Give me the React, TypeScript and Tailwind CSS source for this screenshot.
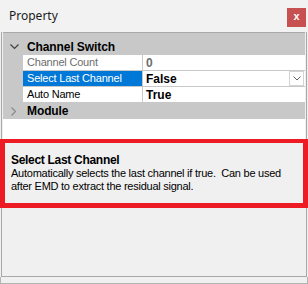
import React from "react";

const Down = ({ c }: { c: string }) => (
  <svg width="9" height="6" viewBox="0 0 9 6">
    <path d="M0.5 0.5 L4.5 4.5 L8.5 0.5" fill="none" stroke={c} strokeWidth="1.2" />
  </svg>
);

const Right = ({ c }: { c: string }) => (
  <svg width="6" height="9" viewBox="0 0 6 9">
    <path d="M0.5 0.5 L4.5 4.5 L0.5 8.5" fill="none" stroke={c} strokeWidth="1.2" />
  </svg>
);

function Category({ label, open }: { label: string; open: boolean }) {
  return (
    <div className="flex h-[16px] items-center bg-[#c8c8c8]">
      <div className="flex w-[20px] justify-center items-center pl-[2px]">
        {open ? <Down c="#404040" /> : <Right c="#8a8a8a" />}
      </div>
      <span className="pl-[4px] text-[12px] font-bold text-black tracking-[-0.1px]">{label}</span>
    </div>
  );
}

function Prop({
  label,
  value,
  selected,
  readonly,
  dropdown,
}: {
  label: string;
  value: string;
  selected?: boolean;
  readonly?: boolean;
  dropdown?: boolean;
}) {
  return (
    <div className="flex h-[16px] bg-[#c8c8c8]">
      <div className="w-[20px]" />
      <div
        className={
          "w-[119px] mb-[1px] pl-[4px] flex items-center text-[11px] tracking-[-0.2px] " +
          (selected ? "bg-[#0078d7] text-white" : "bg-white " + (readonly ? "text-[#6d6d6d]" : "text-black"))
        }
      >
        {label}
      </div>
      <div className="w-[1px]" />
      <div
        className={
          "flex-1 mb-[1px] bg-white pl-[3px] flex items-center justify-between text-[12px] font-bold " +
          (readonly ? "text-[#6d6d6d]" : "text-black")
        }
      >
        <span>{value}</span>
        {dropdown && (
          <div className="w-[15px] h-[15px] mr-[1px] border border-[#d4d4d4] bg-white flex items-center justify-center">
            <svg width="8" height="5" viewBox="0 0 8 5">
              <path d="M0.5 0.5 L4 4 L7.5 0.5" fill="none" stroke="#606060" strokeWidth="1" />
            </svg>
          </div>
        )}
      </div>
    </div>
  );
}

export default function App() {
  return (
    <div
      className="w-[308px] h-[284px] bg-[#f0f0f0] flex flex-col overflow-hidden"
      style={{ fontFamily: '"Liberation Sans", Arial, sans-serif' }}
    >
      <div className="h-[32px] bg-[#f2f2f2] flex items-start justify-between pl-[9px] pr-[2px] shrink-0">
        <span
          className="mt-[7px] text-[12px] text-[#1a1a1a]"
          style={{ fontFamily: '"Noto Sans", "Liberation Sans", sans-serif' }}
        >
          Property
        </span>
        <div className="mt-[8px] w-[19px] h-[19px] bg-[#c75050] flex items-center justify-center text-white text-[11px] font-bold leading-none pb-[2px]">
          x
        </div>
      </div>
      <div className="flex-1 mx-[1px] border-x border-[#a8a8a8] flex flex-col relative">
        <div className="mx-[1px] border-t border-[#a8a8a8]">
          <div className="h-[6px] bg-[#c8c8c8]" />
          <Category label="Channel Switch" open />
          <Prop label="Channel Count" value="0" readonly />
          <Prop label="Select Last Channel" value="False" selected dropdown />
          <Prop label="Auto Name" value="True" />
          <Category label="Module" open={false} />
        </div>
        <div className="h-[20px] bg-white mx-[1px]" />
        <div className="h-[69px] -mx-[2px] border-[5px] border-t-[4px] border-[#ed1c24] bg-[#f0f0f0] pl-[6px] pt-[10px]">
          <div className="text-[12px] font-bold text-black leading-[14px] tracking-[-0.3px]">Select Last Channel</div>
          <div className="text-[11px] text-black leading-[13px] whitespace-pre tracking-[-0.25px]">
            {"Automatically selects the last channel if true.  Can be used\nafter EMD to extract the residual signal."}
          </div>
        </div>
        <div className="flex-1" />
        <div className="h-[1px] bg-[#a8a8a8]" />
      </div>
      <div className="h-[7px] shrink-0 mx-0 border-x border-b border-[#b4b4b4] bg-[#f0f0f0]" />
    </div>
  );
}
